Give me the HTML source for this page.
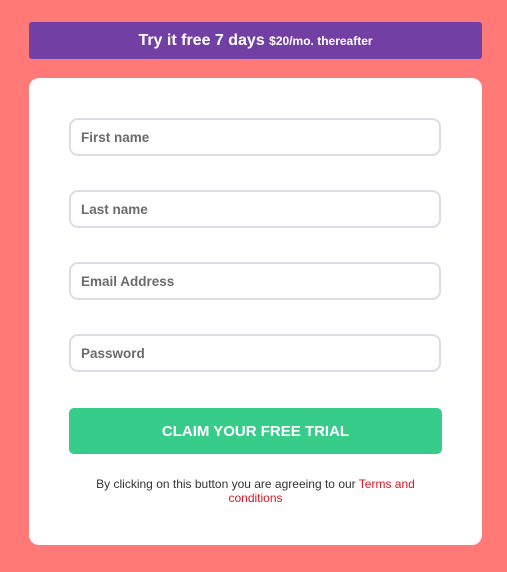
<!DOCTYPE html>
<html><head><style>
body{margin:0;width:507px;height:572px;background:#ff7976;font-family:"Liberation Sans",sans-serif;position:relative;overflow:hidden}
.banner{position:absolute;left:29px;top:22px;width:453px;height:37px;background:#723fa4;border-radius:3px;color:#fff;text-align:center;line-height:38px;font-weight:bold;font-size:16px}
.banner small{font-size:12px}
.card{position:absolute;left:29px;top:78px;width:453px;height:467px;background:#fff;border-radius:10px}
.inp{position:absolute;left:40px;width:358px;height:34px;border:2px solid #dcdbe6;border-radius:9px;font-size:13.5px;font-weight:bold;color:#6b6b6b;line-height:35px;padding-left:10px}
.btn{position:absolute;left:40px;top:330px;width:373px;height:46px;background:#38cc8b;border-radius:5px;color:#fff;font-weight:bold;font-size:15px;text-align:center;line-height:48px}
.t{position:absolute;left:40px;top:399px;width:373px;text-align:center;font-size:12px;line-height:14px;color:#333}
.t span{color:#e0151f}
</style></head><body>
<div class="banner">Try it free 7 days <small>$20/mo. thereafter</small></div>
<div class="card">
<div class="inp" style="top:40px">First name</div>
<div class="inp" style="top:112px">Last name</div>
<div class="inp" style="top:184px">Email Address</div>
<div class="inp" style="top:256px">Password</div>
<div class="btn">CLAIM YOUR FREE TRIAL</div>
<div class="t">By clicking on this button you are agreeing to our <span>Terms and conditions</span></div>
</div>
</body></html>
